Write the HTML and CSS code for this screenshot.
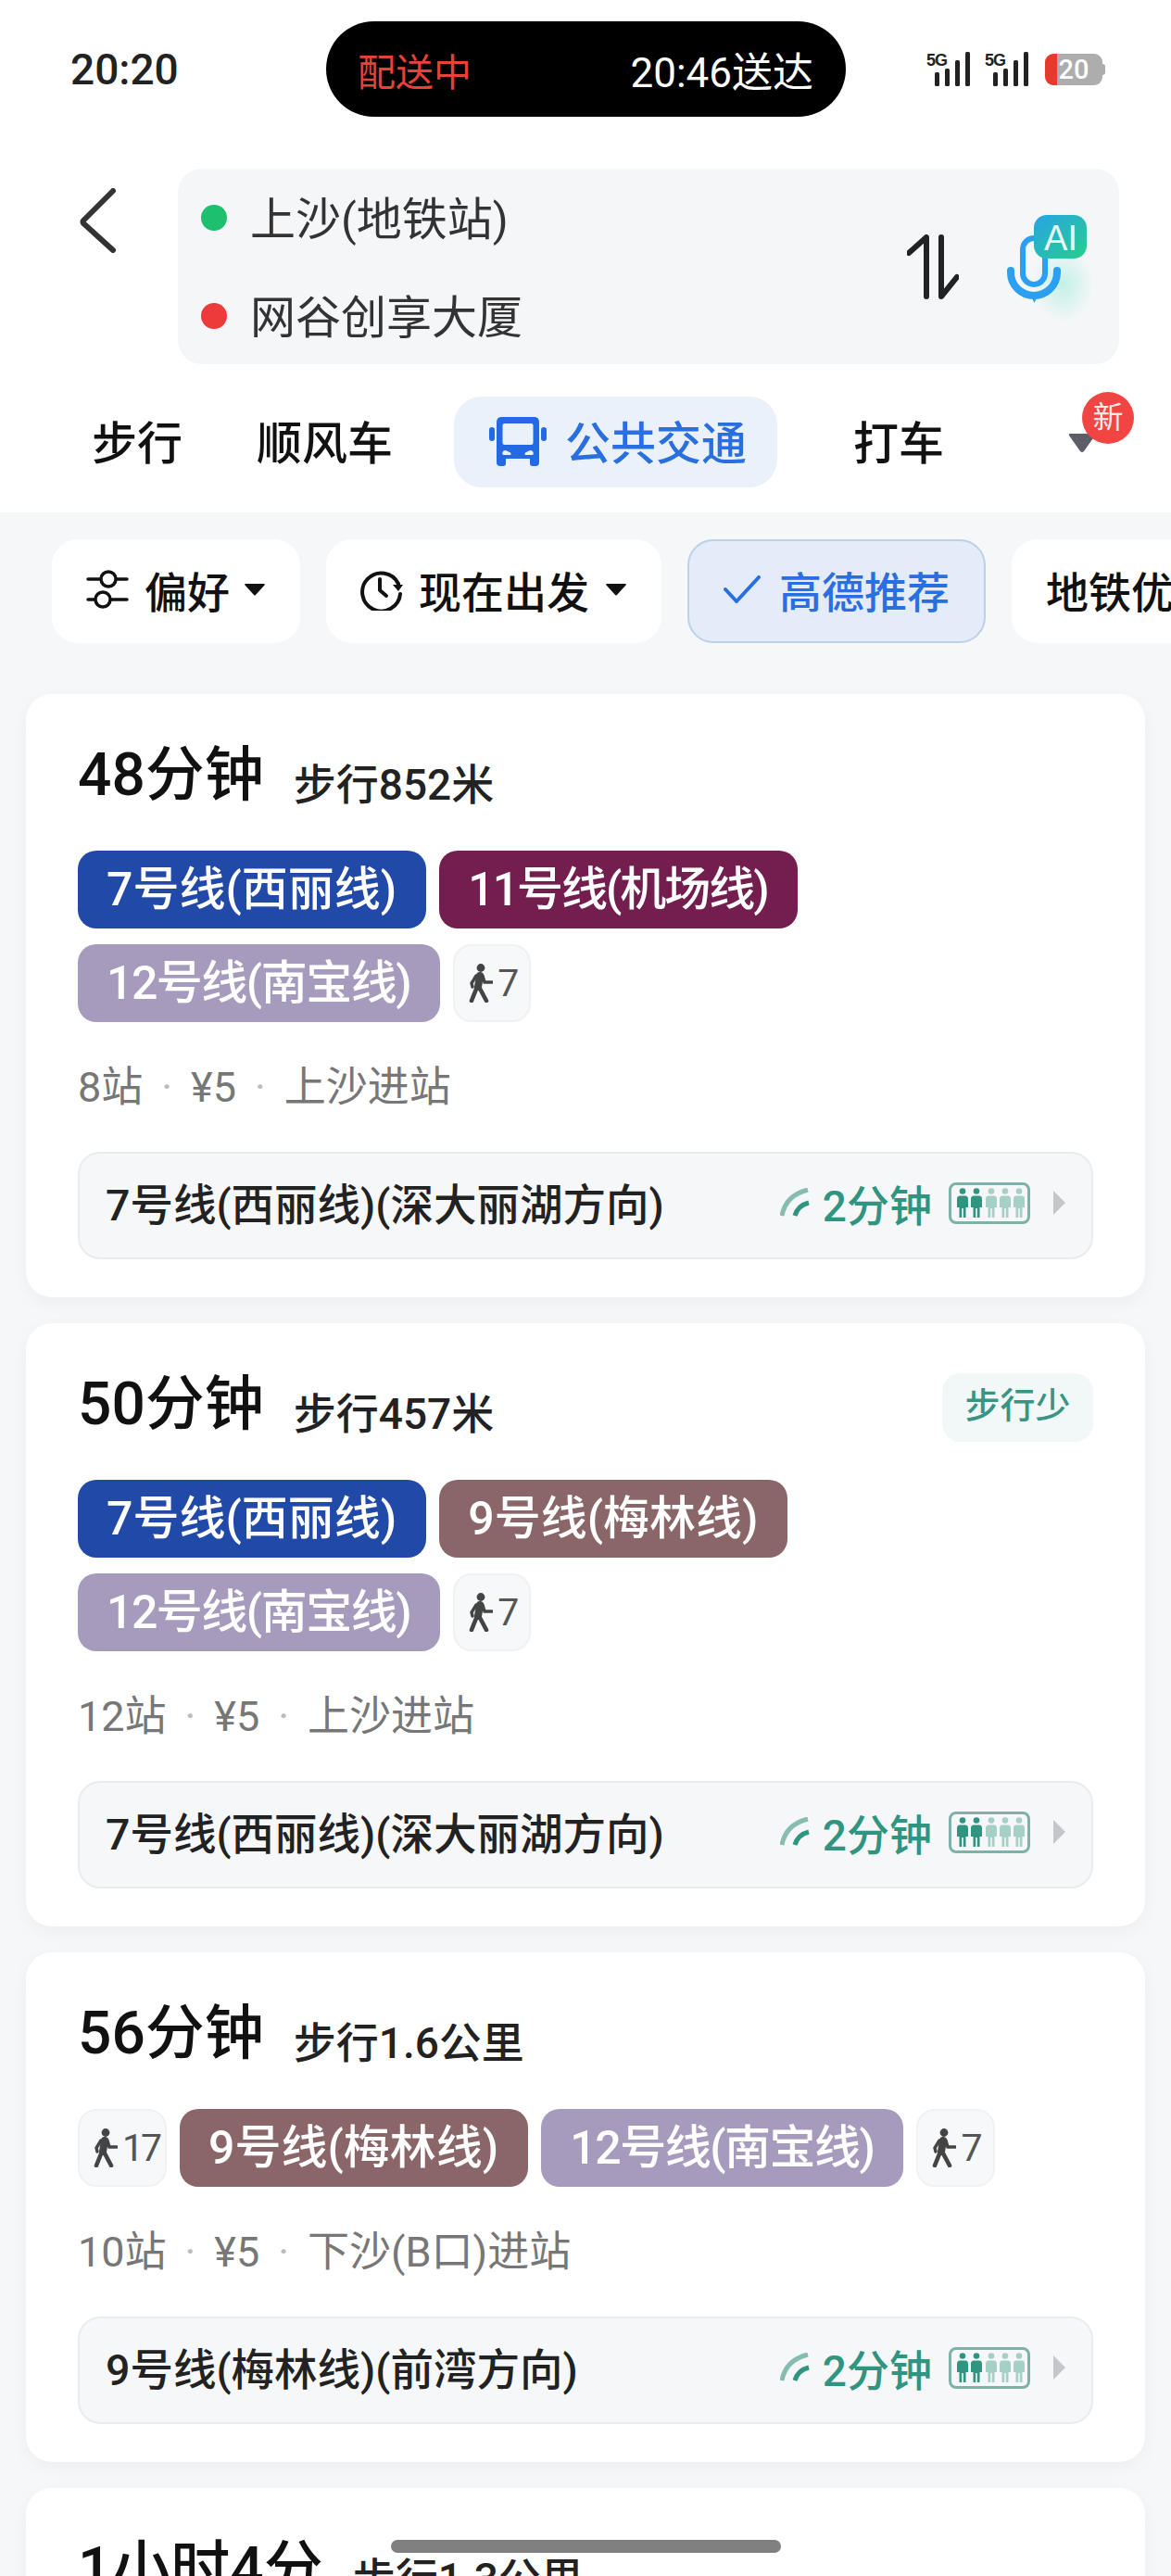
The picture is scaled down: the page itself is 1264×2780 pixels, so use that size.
FILE: index.html
```html
<!DOCTYPE html>
<html lang="zh-CN">
<head>
    <meta charset="UTF-8">
    <meta name="viewport" content="width=device-width, initial-scale=1.0">
    <title>公共交通路线</title>
    <link rel="stylesheet" href="styles.css">
</head>
<body>
    <!-- shared icons -->
    <svg class="icon-defs" aria-hidden="true">
        <symbol id="walker" viewBox="0 0 26 42">
            <circle cx="13" cy="4.5" r="4.4" fill="#444"/>
            <path d="M12 13 L10 25" stroke="#444" stroke-width="8" stroke-linecap="round" fill="none"/>
            <path d="M9 25 L3 40 M11 25 L19 40" stroke="#444" stroke-width="4.600" stroke-linecap="round" fill="none"/>
            <path d="M8 13 L3 21 L4 25" stroke="#444" stroke-width="3.400" stroke-linecap="round" fill="none"/>
            <path d="M15 13 L17 20 L25 20" stroke="#444" stroke-width="3.400" stroke-linecap="round" fill="none"/>
        </symbol>
        <symbol id="person" viewBox="0 0 14 32">
            <circle cx="7" cy="3.500" r="3.300"/>
            <path d="M1 12 Q1 8.500 4 8.500 H10 Q13 8.500 13 12 V21 H10.500 V32 H7.800 V22 H6.200 V32 H3.500 V21 H1 Z"/>
        </symbol>
        <symbol id="bars" viewBox="0 0 56 40">
            <rect x="9" y="23" width="5" height="15" rx="1.500" fill="#222"/>
            <rect x="20" y="19" width="5" height="19" rx="1.500" fill="#222"/>
            <rect x="31" y="10" width="5" height="28" rx="1.500" fill="#222"/>
            <rect x="42" y="1" width="5" height="37" rx="1.500" fill="#222"/>
        </symbol>
        <symbol id="realtime" viewBox="0 0 32 32">
            <path d="M2 30 Q6 8 30 2" stroke="#86bdb0" stroke-width="5" fill="none"/>
            <path d="M16 30 Q19 19 31 16" stroke="#2f9480" stroke-width="5" fill="none"/>
        </symbol>
        <symbol id="caret" viewBox="0 0 24 14">
            <path d="M2 1 H22 Q23.500 1 22.500 2.500 L13 13 Q12 14 11 13 L1.500 2.500 Q.5 1 2 1 Z" fill="#111"/>
        </symbol>
    </svg>

    <header class="top">
        <div class="status-bar">
            <div class="clock">20:20</div>
            <div class="island">
                <span class="island-red">配送中</span>
                <span>20:46送达</span>
            </div>
            <div class="status-icons">
                <svg class="signal" viewBox="0 0 56 40"><use href="#bars"/><text x="0" y="16" font-family="Liberation Sans" font-size="18" font-weight="700" fill="#222" letter-spacing="-1">5G</text></svg>
                <svg class="signal" viewBox="0 0 56 40"><use href="#bars"/><text x="0" y="16" font-family="Liberation Sans" font-size="18" font-weight="700" fill="#222" letter-spacing="-1">5G</text></svg>
                <div class="battery">20</div>
            </div>
        </div>

        <div class="search-row">
            <svg class="back" viewBox="0 0 42 70"><path d="M37 3 L5 35 Q4 36 5 38 L37 67" stroke="#333" stroke-width="6" stroke-linecap="round" fill="none"/></svg>
            <div class="search-box">
                <div class="places">
                    <div class="place"><span class="dot dot-green"></span>上沙(地铁站)</div>
                    <div class="place"><span class="dot dot-red"></span>网谷创享大厦</div>
                </div>
                <svg class="swap" viewBox="0 0 56 70">
                    <path d="M2 20 L21 3 V67 M37 3 V67 L54 46" stroke="#222" stroke-width="6" stroke-linecap="round" stroke-linejoin="round" fill="none"/>
                </svg>
                <svg class="mic" viewBox="0 0 95 118">
                    <defs>
                        <linearGradient id="badge-fill" x1="0" y1="0" x2="1" y2="1">
                            <stop offset="0" stop-color="#28a4e6"/>
                            <stop offset="1" stop-color="#25cf8c"/>
                        </linearGradient>
                        <radialGradient id="mic-glow">
                            <stop offset="0" stop-color="#b5efe0" stop-opacity=".8"/>
                            <stop offset="1" stop-color="#b5efe0" stop-opacity="0"/>
                        </radialGradient>
                    </defs>
                    <ellipse cx="62" cy="78" rx="33" ry="40" fill="url(#mic-glow)"/>
                    <rect x="19" y="28" width="24" height="50" rx="12" stroke="#2b9ff2" stroke-width="6" fill="none"/>
                    <path d="M6 63 V65 A25 25 0 0 0 56 65 V63" stroke="#2b9ff2" stroke-width="8" stroke-linecap="round" fill="none"/>
                    <path d="M27 88 H36 L31.500 98 Z" fill="#2b9ff2"/>
                    <rect x="31" y="3" width="57" height="47" rx="14" fill="url(#badge-fill)"/>
                    <text x="60" y="41" text-anchor="middle" font-family="Liberation Sans" font-size="38" fill="#e8fbf6">AI</text>
                </svg>
            </div>
        </div>

        <nav class="tabs">
            <div class="tab tab-walk">步行</div>
            <div class="tab tab-ride">顺风车</div>
            <div class="tab tab-active">
                <svg class="bus" viewBox="0 0 62 54">
                    <path fill-rule="evenodd" d="M13 0 H49 Q54 0 54 6 V49 Q54 53 50 53 H47 Q44 53 44 50 V45 H18 V50 Q18 53 15 53 H12 Q8 53 8 49 V6 Q8 0 13 0 Z M16.500 7 Q14.500 7 14.500 9 V28 Q14.500 30 16.500 30 H45.500 Q47.500 30 47.500 28 V9 Q47.500 7 45.500 7 Z M14.500 38 Q13.500 41 16 41 H23 Q24.500 40 23 38.500 L18 36 Q15.500 35.500 14.500 38 Z M47.500 38 Q48.500 41 46 41 H39 Q37.500 40 39 38.500 L44 36 Q46.500 35.500 47.500 38 Z" fill="#2468e6"/>
                    <rect x="0" y="11" width="6" height="15" rx="3" fill="#2468e6"/>
                    <rect x="56" y="11" width="6" height="15" rx="3" fill="#2468e6"/>
                </svg>
                公共交通
            </div>
            <div class="tab tab-taxi">打车</div>
            <div class="tab-more">
                <svg class="more-caret" viewBox="0 0 32 22"><path d="M3 1 H29 Q31 1 30 3 L18 20 Q16 22 14 20 L2 3 Q1 1 3 1 Z" fill="#5c5f66"/></svg>
                <span class="new-badge">新</span>
            </div>
        </nav>
    </header>

    <div class="filters">
        <div class="chip">
            <svg class="chip-icon" viewBox="0 0 46 42">
                <g stroke="#111" stroke-width="3.500" fill="none" stroke-linecap="round">
                    <path d="M2 10 H15 M33 10 H44 M2 32 H9 M27 32 H44"/>
                    <circle cx="24" cy="10" r="8"/>
                    <circle cx="18" cy="32" r="8"/>
                </g>
            </svg>
            <span>偏好</span>
            <svg class="chip-caret chip-caret-tight"><use href="#caret"/></svg>
        </div>
        <div class="chip">
            <svg class="chip-icon" viewBox="0 0 46 46">
                <g stroke="#111" stroke-width="4" fill="none" stroke-linecap="round" stroke-linejoin="round">
                    <path d="M41 17 A20.500 20.500 0 1 0 43 28"/>
                    <path d="M21 12 V24 L28 30"/>
                </g>
                <path d="M35 18 L46 18 L41 25 Z" fill="#111"/>
            </svg>
            <span>现在出发</span>
            <svg class="chip-caret"><use href="#caret"/></svg>
        </div>
        <div class="chip chip-on">
            <svg class="chip-check" viewBox="0 0 40 30"><path d="M2 15 L14 28 L38 2" stroke="#2a6fe0" stroke-width="4" stroke-linecap="round" stroke-linejoin="round" fill="none"/></svg>
            <span>高德推荐</span>
        </div>
        <div class="chip"><span>地铁优先</span></div>
    </div>

    <main class="routes">
        <section class="card">
            <div class="card-head">
                <span class="duration">48分钟</span>
                <span class="walk-dist">步行852米</span>
            </div>
            <div class="pills">
                <span class="pill line-7">7号线(西丽线)</span>
                <span class="pill line-11">11号线(机场线)</span>
                <span class="pill line-12">12号线(南宝线)</span>
                <span class="walk-pill"><svg class="walker"><use href="#walker"/></svg>7</span>
            </div>
            <div class="meta">8站<i class="sep">·</i>¥5<i class="sep">·</i>上沙进站</div>
            <div class="next-bar">
                <span class="next-name">7号线(西丽线)(深大丽湖方向)</span>
                <svg class="rt-icon"><use href="#realtime"/></svg>
                <span class="next-time">2分钟</span>
                <span class="crowd">
                    <svg class="person dark"><use href="#person"/></svg>
                    <svg class="person dark"><use href="#person"/></svg>
                    <svg class="person"><use href="#person"/></svg>
                    <svg class="person"><use href="#person"/></svg>
                    <svg class="person"><use href="#person"/></svg>
                </span>
                <span class="next-arrow"></span>
            </div>
        </section>

        <section class="card">
            <div class="card-head">
                <span class="duration">50分钟</span>
                <span class="walk-dist">步行457米</span>
                <span class="tag">步行少</span>
            </div>
            <div class="pills">
                <span class="pill line-7">7号线(西丽线)</span>
                <span class="pill line-9">9号线(梅林线)</span>
                <span class="pill line-12">12号线(南宝线)</span>
                <span class="walk-pill"><svg class="walker"><use href="#walker"/></svg>7</span>
            </div>
            <div class="meta">12站<i class="sep">·</i>¥5<i class="sep">·</i>上沙进站</div>
            <div class="next-bar">
                <span class="next-name">7号线(西丽线)(深大丽湖方向)</span>
                <svg class="rt-icon"><use href="#realtime"/></svg>
                <span class="next-time">2分钟</span>
                <span class="crowd">
                    <svg class="person dark"><use href="#person"/></svg>
                    <svg class="person dark"><use href="#person"/></svg>
                    <svg class="person"><use href="#person"/></svg>
                    <svg class="person"><use href="#person"/></svg>
                    <svg class="person"><use href="#person"/></svg>
                </span>
                <span class="next-arrow"></span>
            </div>
        </section>

        <section class="card">
            <div class="card-head">
                <span class="duration">56分钟</span>
                <span class="walk-dist">步行1.6公里</span>
            </div>
            <div class="pills">
                <span class="walk-pill walk-pill-long"><svg class="walker"><use href="#walker"/></svg>17</span>
                <span class="pill line-9">9号线(梅林线)</span>
                <span class="pill line-12">12号线(南宝线)</span>
                <span class="walk-pill"><svg class="walker"><use href="#walker"/></svg>7</span>
            </div>
            <div class="meta">10站<i class="sep">·</i>¥5<i class="sep">·</i>下沙(B口)进站</div>
            <div class="next-bar">
                <span class="next-name">9号线(梅林线)(前湾方向)</span>
                <svg class="rt-icon"><use href="#realtime"/></svg>
                <span class="next-time">2分钟</span>
                <span class="crowd">
                    <svg class="person dark"><use href="#person"/></svg>
                    <svg class="person dark"><use href="#person"/></svg>
                    <svg class="person"><use href="#person"/></svg>
                    <svg class="person"><use href="#person"/></svg>
                    <svg class="person"><use href="#person"/></svg>
                </span>
                <span class="next-arrow"></span>
            </div>
        </section>

        <section class="card">
            <div class="card-head">
                <span class="duration">1小时4分</span>
                <span class="walk-dist">步行1.3公里</span>
            </div>
        </section>
    </main>

    <div class="home-bar"></div>
</body>
</html>
```

FILE: styles.css
```css
html, body {
    margin: 0;
    padding: 0;
    height: 2780px;
    overflow: hidden;
    font-family: Roboto, "Noto Sans CJK SC", sans-serif;
    background-color: #f5f7f9;
    color: #111;
}
.icon-defs {
    width: 0;
    height: 0;
    display: block;
}
.top {
    background-color: white;
    height: 553px;
}
.status-bar {
    display: flex;
    align-items: center;
    height: 103px;
    padding: 23px 0 56px 76px;
    box-sizing: content-box;
}
.clock {
    width: 276px;
    font-size: 46px;
    font-weight: 500;
    color: #222;
}
.island {
    width: 561px;
    height: 103px;
    box-sizing: border-box;
    padding: 0 35px 0 34px;
    border-radius: 52px;
    background-color: black;
    color: white;
    font-size: 44px;
    display: flex;
    align-items: center;
    justify-content: space-between;
}
.island-red {
    color: #e8413a;
    font-size: 41px;
}
.status-icons {
    margin-left: 87px;
    display: flex;
    align-items: center;
}
.signal {
    width: 56px;
    height: 40px;
    margin-right: 7px;
}
.battery {
    position: relative;
    width: 62px;
    height: 34px;
    margin-left: 2px;
    border-radius: 9px;
    background: linear-gradient(90deg, #e8392e 13px, #adadad 13px);
    color: white;
    font-size: 29px;
    font-weight: 500;
    line-height: 34px;
    text-align: center;
}
.battery::after {
    content: "";
    position: absolute;
    right: -3px;
    top: 11px;
    width: 3px;
    height: 12px;
    border-radius: 0 3px 3px 0;
    background-color: #adadad;
}
.search-row {
    display: flex;
    align-items: flex-start;
    padding-left: 85px;
}
.back {
    width: 42px;
    height: 70px;
    margin-top: 21px;
    margin-right: 65px;
}
.search-box {
    width: 1016px;
    height: 211px;
    box-sizing: border-box;
    padding: 0 28px 0 25px;
    border-radius: 26px;
    background-color: #f4f6f8;
    display: flex;
    align-items: center;
}
.places {
    flex-grow: 1;
    display: flex;
    flex-direction: column;
    gap: 46px;
}
.place {
    height: 60px;
    line-height: 66px;
    font-size: 49px;
    color: #333;
    display: flex;
    align-items: flex-start;
}
.dot {
    width: 28px;
    height: 28px;
    border-radius: 50%;
    margin-top: 16px;
    margin-right: 25px;
}
.dot-green {
    background-color: #1cc06e;
}
.dot-red {
    background-color: #ee3a3a;
}
.swap {
    width: 56px;
    height: 70px;
    margin-right: 50px;
}
.mic {
    width: 95px;
    height: 118px;
}
.tabs {
    display: flex;
    align-items: center;
    height: 98px;
    margin-top: 35px;
    padding-left: 99px;
}
.tab {
    font-size: 49px;
    font-weight: 500;
    color: #111;
    white-space: nowrap;
    padding-bottom: 6px;
}
.tab-ride {
    margin-left: 80px;
}
.tab-active {
    margin-left: 66px;
    width: 349px;
    height: 98px;
    box-sizing: border-box;
    padding-left: 38px;
    border-radius: 30px;
    background-color: #ebf1fb;
    color: #2a6fe0;
    display: flex;
    align-items: center;
}
.bus {
    width: 62px;
    height: 54px;
    margin-top: 6px;
    margin-right: 20px;
}
.tab-taxi {
    margin-left: 82px;
}
.tab-more {
    position: relative;
    width: 32px;
    height: 22px;
    margin-left: 133px;
    margin-top: 2px;
}
.more-caret {
    display: block;
    width: 32px;
    height: 22px;
}
.new-badge {
    position: absolute;
    left: 16px;
    top: -44px;
    width: 56px;
    height: 56px;
    border-radius: 50%;
    background-color: #f04542;
    color: #ffe9e6;
    font-size: 33px;
    line-height: 56px;
    text-align: center;
}
.filters {
    display: flex;
    gap: 28px;
    padding: 29px 0 55px 56px;
    overflow: hidden;
}
.chip {
    height: 112px;
    box-sizing: border-box;
    padding: 0 37px 4px;
    border-radius: 28px;
    background-color: white;
    font-size: 46px;
    font-weight: 500;
    display: flex;
    align-items: center;
    flex-shrink: 0;
    white-space: nowrap;
}
.chip-icon {
    width: 46px;
    height: 46px;
    margin-right: 17px;
}
.chip-caret {
    width: 24px;
    height: 14px;
    margin-left: 17px;
}
.chip-caret-tight {
    margin-left: 15px;
}
.chip-on {
    background-color: #e4ecf9;
    border: 2px solid #bcd0ea;
    color: #2a6fe0;
}
.chip-check {
    width: 40px;
    height: 30px;
    margin-right: 20px;
}
.routes {
    display: flex;
    flex-direction: column;
    gap: 28px;
    padding: 0 28px;
}
.card {
    background-color: white;
    border-radius: 28px;
    padding: 50px 56px 41px;
    box-shadow: 0 6px 20px rgba(0,0,0,0.04);
}
.card-head {
    display: flex;
    align-items: baseline;
    height: 80px;
}
.duration {
    font-size: 64px;
    line-height: 76px;
    font-weight: 500;
    color: #111;
    margin-right: 32px;
}
.walk-dist {
    align-self: flex-end;
    margin-bottom: 2px;
    font-size: 46px;
    line-height: 60px;
    font-weight: 500;
    color: #222;
}
.tag {
    margin-left: auto;
    align-self: flex-start;
    margin-top: 4px;
    width: 163px;
    height: 74px;
    line-height: 70px;
    text-align: center;
    border-radius: 20px;
    background-color: #f2f8f8;
    color: #3a9484;
    font-size: 38px;
    font-weight: 500;
}
.pills {
    display: flex;
    flex-wrap: wrap;
    gap: 17px 14px;
    margin-top: 39px;
}
.pill {
    height: 84px;
    line-height: 84px;
    padding: 0 32px 0 31px;
    border-radius: 20px;
    color: white;
    font-size: 50px;
    font-weight: 500;
    white-space: nowrap;
}
.line-7 {
    background-color: #2149a8;
}
.line-9 {
    background-color: #8a6669;
}
.line-11 {
    background-color: #731e4e;
    letter-spacing: -2px;
}
.line-12 {
    background-color: #a69abd;
    letter-spacing: -1.500px;
}
.walk-pill {
    height: 84px;
    box-sizing: border-box;
    padding: 0 11px 0 15px;
    border: 2px solid #eff1f3;
    border-radius: 20px;
    background-color: #f7f8f9;
    color: #555;
    font-size: 41px;
    display: flex;
    align-items: center;
    gap: 5px;
}
.walk-pill-long {
    padding-right: 6px;
    letter-spacing: -3px;
}
.walker {
    width: 26px;
    height: 42px;
}
.meta {
    margin-top: 40px;
    height: 60px;
    line-height: 62px;
    font-size: 45px;
    color: #777;
}
.sep {
    font-style: normal;
    color: #bbb;
    margin: 0 20px;
}
.next-bar {
    margin-top: 40px;
    height: 116px;
    box-sizing: border-box;
    padding: 0 28px 6px;
    border: 2px solid #e9ecee;
    border-radius: 24px;
    background-color: #f5f7f9;
    display: flex;
    align-items: center;
}
.next-name {
    flex-grow: 1;
    padding-bottom: 3px;
    font-size: 46.500px;
    font-weight: 500;
    color: #222;
    white-space: nowrap;
}
.rt-icon {
    width: 32px;
    height: 32px;
    margin-right: 14px;
}
.next-time {
    font-size: 46px;
    font-weight: 500;
    color: #2f9480;
}
.crowd {
    width: 88px;
    height: 45px;
    box-sizing: border-box;
    margin-left: 18px;
    border: 3px solid #7cb3a6;
    border-radius: 8px;
    padding: 3px 2px 0 5px;
    display: flex;
    justify-content: space-between;
}
.person {
    width: 14px;
    height: 32px;
    fill: #a6cfc6;
}
.person.dark {
    fill: #2f9480;
}
.next-arrow {
    margin-left: 25px;
    width: 0;
    height: 0;
    border-left: 13px solid #c4c6c9;
    border-top: 13px solid transparent;
    border-bottom: 13px solid transparent;
}
.home-bar {
    position: absolute;
    left: 422px;
    top: 2741px;
    width: 421px;
    height: 14px;
    border-radius: 7px;
    background-color: #808080;
}
```
